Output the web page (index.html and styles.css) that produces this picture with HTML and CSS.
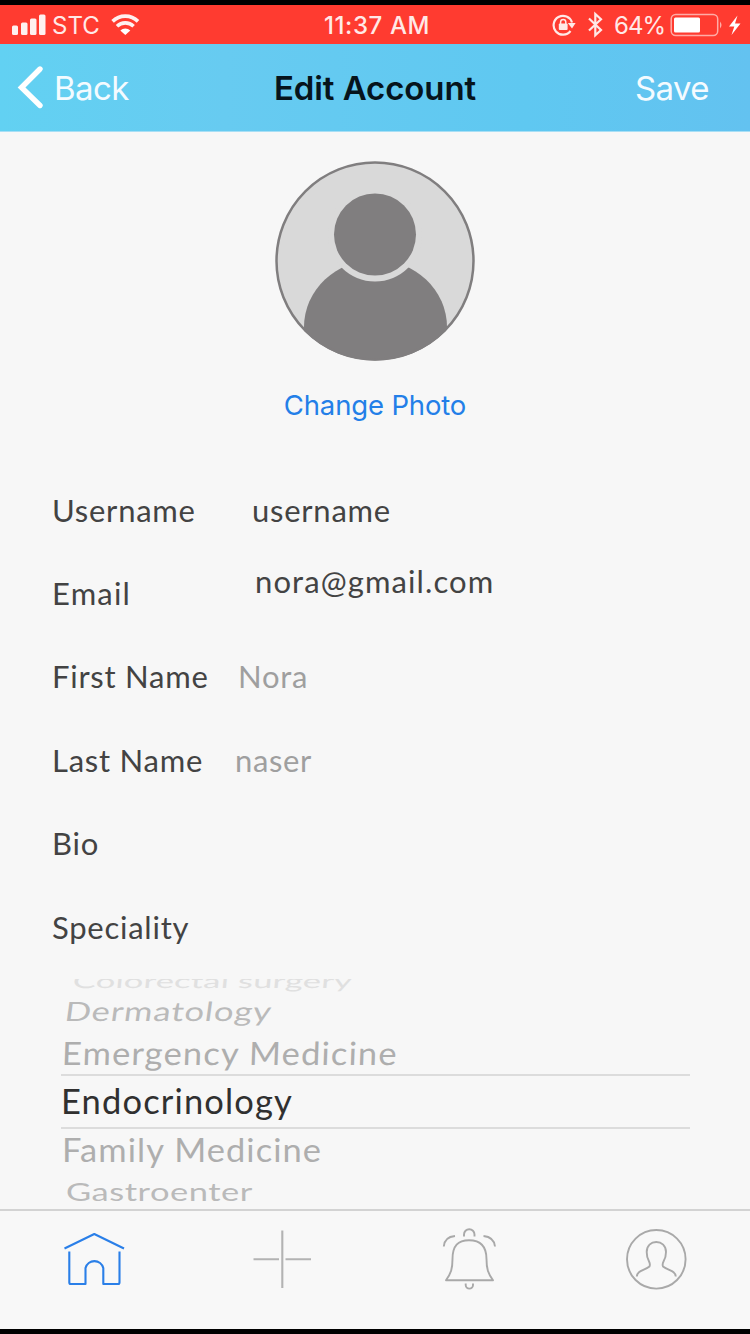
FILE: index.html
```
<!DOCTYPE html>
<html lang="en">
<head>
<meta charset="utf-8">
<title>Edit Account</title>
<link rel="stylesheet" href="styles.css">
</head>
<body>
<div class="screen">
  <header class="status">
    <div class="status-group">
      <svg width="34" height="39" viewBox="12 5 34 39" fill="#fff" fill-opacity=".93">
        <rect x="12" y="25.5" width="6" height="9.5" rx="1.5"/>
        <rect x="21" y="22.5" width="6.5" height="12.5" rx="1.5"/>
        <rect x="30" y="18.5" width="6.5" height="16.5" rx="1.5"/>
        <rect x="39" y="14.5" width="6.5" height="20.5" rx="1.5"/>
      </svg>
      <span class="carrier">STC</span>
      <svg class="wifi" width="30" height="39" viewBox="110 5 30 39" fill="none" stroke="#fff" stroke-opacity=".93" stroke-width="3.6">
        <path d="M112.600 21.400a18 18 0 0 1 25.400 0"/>
        <path d="M117 26.200a12 12 0 0 1 16.600 0"/>
        <path fill="#fff" stroke="none" d="M120.300 30.400a7.300 7.300 0 0 1 10 0L125.300 35z"/>
      </svg>
    </div>
    <span class="clock">11:37 AM</span>
    <div class="status-group status-right">
      <svg width="52" height="39" viewBox="552 5 52 39" fill="none" stroke="#ffe9e7">
        <path stroke-width="2.200" d="M570.500 31A9.400 9.400 0 1 1 572 22.500"/>
        <path fill="#ffe9e7" stroke="none" d="M567.800 23h7.800L572 28.500z"/>
        <rect x="558.800" y="23.500" width="8.800" height="6.500" rx="1" fill="#ffe9e7" stroke="none"/>
        <path stroke-width="1.500" d="M560.600 24v-2a2.600 2.600 0 0 1 5.200 0v2"/>
        <path stroke-width="2.200" d="M589 18.500L601 30L595.300 35.200V14L601 19.200L589 30.500"/>
      </svg>
      <span class="percent">64%</span>
      <svg width="72" height="39" viewBox="670 5 72 39" fill="none" stroke="#ffe9e7">
        <rect x="671.200" y="14.500" width="46.500" height="21" rx="4.500" stroke-width="1.500" stroke-opacity=".65"/>
        <rect x="674" y="17.500" width="26" height="15" rx="1.500" fill="#fff" stroke="none"/>
        <path d="M720 21.500q3 3.500 0 7z" fill="#ffe9e7" fill-opacity=".65" stroke="none"/>
        <path d="M737.500 15.500L729 26.500H734.300L731.500 35L740.500 23.500H735z" fill="#fff" stroke="none"/>
      </svg>
    </div>
  </header>

  <nav class="navbar">
    <a class="back">
      <svg width="28" height="46" viewBox="17 66 28 46" fill="none" stroke="#fff" stroke-width="5.400" stroke-linecap="round"><path d="M40 70L21.500 88.500L40 106.500"/></svg>
      <span class="back-label">Back</span>
    </a>
    <h1 class="title">Edit Account</h1>
    <a class="save">Save</a>
  </nav>

  <main class="content">
    <section class="photo">
      <svg width="202" height="202" viewBox="0 0 202 202">
        <defs><clipPath id="disc"><circle cx="101" cy="101" r="99.500"/></clipPath></defs>
        <circle cx="101" cy="101" r="98.500" fill="#d9d9d9"/>
        <g clip-path="url(#disc)">
          <ellipse cx="101.500" cy="167" rx="71.500" ry="67" fill="#807e7f"/>
          <circle cx="101" cy="74.500" r="47" fill="#d9d9d9"/>
        </g>
        <circle cx="101" cy="74.500" r="41" fill="#807e7f"/>
        <circle cx="101" cy="101" r="98.500" fill="none" stroke="#807e7f" stroke-width="2.500"/>
      </svg>
      <a class="change">Change Photo</a>
    </section>

    <section class="form">
      <div class="row"><span class="label">Username</span><span class="value username">username</span></div>
      <div class="row"><span class="label email-label">Email</span><span class="value email">nora@gmail.com</span></div>
      <div class="row"><span class="label">First Name</span><span class="value hint first">Nora</span></div>
      <div class="row"><span class="label">Last Name</span><span class="value hint last">naser</span></div>
      <div class="row"><span class="label">Bio</span></div>
      <div class="row"><span class="label">Speciality</span></div>
    </section>

    <section class="picker">
      <div class="option far"><span>Colorectal surgery</span></div>
      <div class="option upper"><span>Dermatology</span></div>
      <div class="option above"><span>Emergency Medicine</span></div>
      <div class="option chosen"><span>Endocrinology</span></div>
      <div class="option below"><span>Family Medicine</span></div>
      <div class="option lower"><span>Gastroenter</span></div>
    </section>
  </main>

  <footer class="tabs">
    <svg class="tab" viewBox="0 0 64 64" fill="none" stroke="#2a7fe8" stroke-width="2.100" stroke-linejoin="round">
      <path d="M2.500 20.500L32.300 6L62 20.500M7.300 23.500V54.500Q7.300 56 8.800 56H23.500V40A9.200 9.200 0 0 1 41.300 40V56H56Q57.500 56 57.500 54.500V23.500"/>
    </svg>
    <svg class="tab" viewBox="0 0 64 64" fill="none" stroke="#b3b3b3" stroke-width="2.100"><path d="M33.300 2.500V60M4.500 31.200H30M36.500 31.200H62"/></svg>
    <svg class="tab" viewBox="0 0 64 64" fill="none" stroke="#a9a9a9" stroke-width="1.900" stroke-linejoin="round">
      <path d="M9 52.300C14 45 15.500 41 15.500 31C15.500 18 21 12.200 32 12.200S49.500 18 49.500 31C49.500 41 51 45 56 52.300z"/>
      <path d="M27 8.500V6.500A5.200 5.200 0 0 1 37.500 6.500V8.500M28.700 55.500V57A3.500 3.500 0 0 0 36 57V55.500M6.800 18.500Q7.500 9 18 8M58 18.500Q57 9 46.500 8"/>
    </svg>
    <svg class="tab" viewBox="0 0 64 64" fill="none" stroke="#a9a9a9" stroke-width="1.900">
      <circle cx="32.300" cy="31.300" r="29.300"/>
      <path d="M12.800 48.500C13.500 42 20 43 25.500 38.500C27.500 33.500 22.700 34 22.700 24C22.700 17.500 27 14 32.300 14S42 17.500 42 24C42 34 37 33.500 39 38.500C44.500 43 51 42 51.800 48.500"/>
    </svg>
  </footer>
</div>
</body>
</html>
```

FILE: styles.css
```
* { box-sizing: border-box; }
body { margin: 0; background: #000; }
.screen { width: 750px; height: 1334px; padding: 5px 0; display: flex; flex-direction: column; font-family: Inter, "Liberation Sans", sans-serif; }

.status { height: 39px; flex: none; display: grid; grid-template-columns: 1fr auto 1fr; padding: 0 8px 0 12px; background: #ff3b30; color: #ffe9e7; font-size: 24px; line-height: 41px; white-space: nowrap; }
.status-group { display: flex; }
.status-right { justify-content: flex-end; }
.carrier { margin-left: 6px; width: 58px; }
.clock { font-weight: 500; letter-spacing: 0.6px; }
.percent { margin-left: 10px; width: 56px; letter-spacing: -0.9px; }

.navbar { height: 88px; flex: none; display: grid; grid-template-columns: 1fr auto 1fr; align-items: center; background: linear-gradient(90deg, #62d1f2, #67cbf1 30%, #5fc8f1 70%, #63c2f0); border-bottom: 1px solid #a8dff5; font-size: 33px; line-height: 40px; letter-spacing: -0.6px; color: #f4fbff; }
.back { display: flex; align-items: center; gap: 9px; padding-left: 17px; }
.title { margin: 0; font-size: 33px; font-weight: 600; letter-spacing: -0.1px; color: #06141c; }
.save { justify-self: end; padding-right: 41px; }

.content { flex: 1; min-height: 0; overflow: hidden; background: #f7f7f7; display: flex; flex-direction: column; }
.photo { height: 336px; flex: none; padding-top: 28px; display: flex; flex-direction: column; align-items: center; }
.photo svg { flex: none; }
.change { margin-top: 25px; font-size: 27.5px; line-height: 36px; letter-spacing: -0.15px; color: #237fe8; }

.form { flex: none; font-family: Lato, "Open Sans", sans-serif; font-size: 31px; letter-spacing: 0.75px; color: #434343; padding-left: 52px; }
.row { height: 83.4px; display: flex; align-items: center; line-height: 40px; white-space: nowrap; }
.label { width: 200px; flex: none; }
.email-label { letter-spacing: 1.2px; }
.email { margin: 0 0 24px 3px; letter-spacing: 1.1px; }
.hint { color: #9f9f9f; }
.first { margin-left: -14px; }
.last { margin-left: -17px; letter-spacing: 0.6px; }

.picker { flex: none; width: 629px; margin: 1.6px 0 0 61px; font-family: Lato, "Open Sans", sans-serif; font-size: 34.5px; line-height: 36px; clip-path: inset(9px 0 0 0); }
.option { display: flex; align-items: center; color: #aeaeae; letter-spacing: 1.15px; white-space: nowrap; }
.option span { position: relative; top: 1px; transform-origin: 0 50%; }
.far { height: 20px; color: #e0e0e0; letter-spacing: 0.2px; padding-left: 12px; }
.far span { transform: scaleY(0.54) skewX(-3deg); }
.upper { height: 39.2px; color: #bababa; letter-spacing: 0.9px; padding-left: 4px; }
.upper span { transform: scaleY(0.77) skewX(-6deg); }
.above { height: 44.8px; padding-left: 1px; }
.above span { transform: scaleY(0.93) skewX(-2deg); }
.chosen { height: 55px; padding-bottom: 3px; color: #303030; border-top: 2px solid #dcdcdc; border-bottom: 2px solid #dcdcdc; }
.below { height: 39.2px; padding-left: 1px; letter-spacing: 1.05px; }
.below span { transform: scaleY(0.93); }
.lower { height: 43.6px; color: #bababa; letter-spacing: 0.5px; padding-left: 5px; }
.lower span { transform: scaleY(0.74); }

.tabs { height: 120px; flex: none; background: #f8f8f8; border-top: 2px solid #d3d3d3; display: grid; grid-template-columns: repeat(4, 1fr); justify-items: center; padding-top: 17px; }
.tab { width: 64px; height: 64px; }
```
